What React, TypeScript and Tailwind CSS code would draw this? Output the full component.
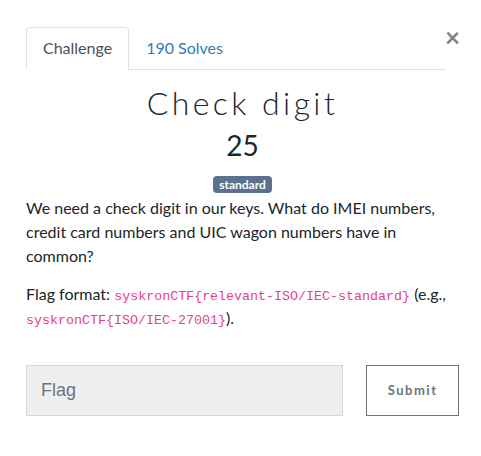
export default function App() {
  return (
    <div className="w-[481px] h-[456px] bg-white text-[#212529]" style={{ fontFamily: "Lato, 'Noto Sans', sans-serif" }}>
      <div className="relative pt-[27px] pl-[26px] pr-[22px]">
        <div className="absolute right-[21px] top-[24px] text-[26px] font-bold leading-none text-[#7f7f7f]">×</div>
        <div className="flex w-[420px] border-b border-[#dee2e6]">
          <div className="-mb-px px-4 py-2 text-[16px] leading-6 text-[#495057] border border-[#dee2e6] border-b-white rounded-t bg-white">
            Challenge
          </div>
          <div className="px-4 py-2 text-[16px] leading-6 text-[#337ab7] border border-transparent">190 Solves</div>
        </div>
        <div className="w-[433px] flex flex-col items-center">
          <h2 className="mt-[14px] text-[32px] font-light leading-[1.2] tracking-[3.4px] text-[#212529]">Check digit</h2>
          <h3 className="mt-[7px] text-[28px] leading-[1.2] text-[#212529]">25</h3>
          <span className="mt-[13px] h-[17px] px-[6px] rounded-[4px] bg-[#5b7190] text-white text-[12px] font-bold leading-[17px]">standard</span>
        </div>
        <div className="w-[433px] text-[16px] leading-6 mt-[3px]">
          <p className="mb-[14px]">We need a check digit in our keys. What do IMEI numbers, credit card numbers and UIC wagon numbers have in common?</p>
          <p>
            Flag format:{" "}
            <code className="text-[#e83e8c] text-[13.33px] leading-none" style={{ fontFamily: "'Liberation Mono', monospace" }}>syskronCTF{"{"}relevant-ISO/IEC-standard{"}"}</code>{" "}
            (e.g.,{" "}
            <code className="text-[#e83e8c] text-[13.33px] leading-none" style={{ fontFamily: "'Liberation Mono', monospace" }}>syskronCTF{"{"}ISO/IEC-27001{"}"}</code>).
          </p>
        </div>
        <div className="flex mt-[35px]">
          <div className="w-[318px] h-[51px] bg-[#efefef] border border-[#d3d8dd] flex items-center pl-[14px] text-[18px] text-[#6c757d]" style={{ fontFamily: "'Liberation Sans', Arial, sans-serif" }}>
            Flag
          </div>
          <button className="ml-[23px] w-[93px] h-[51px] border border-[#6c757d] bg-white text-[13px] font-bold tracking-[1.5px] text-[#6c757d]">
            Submit
          </button>
        </div>
      </div>
    </div>
  );
}
